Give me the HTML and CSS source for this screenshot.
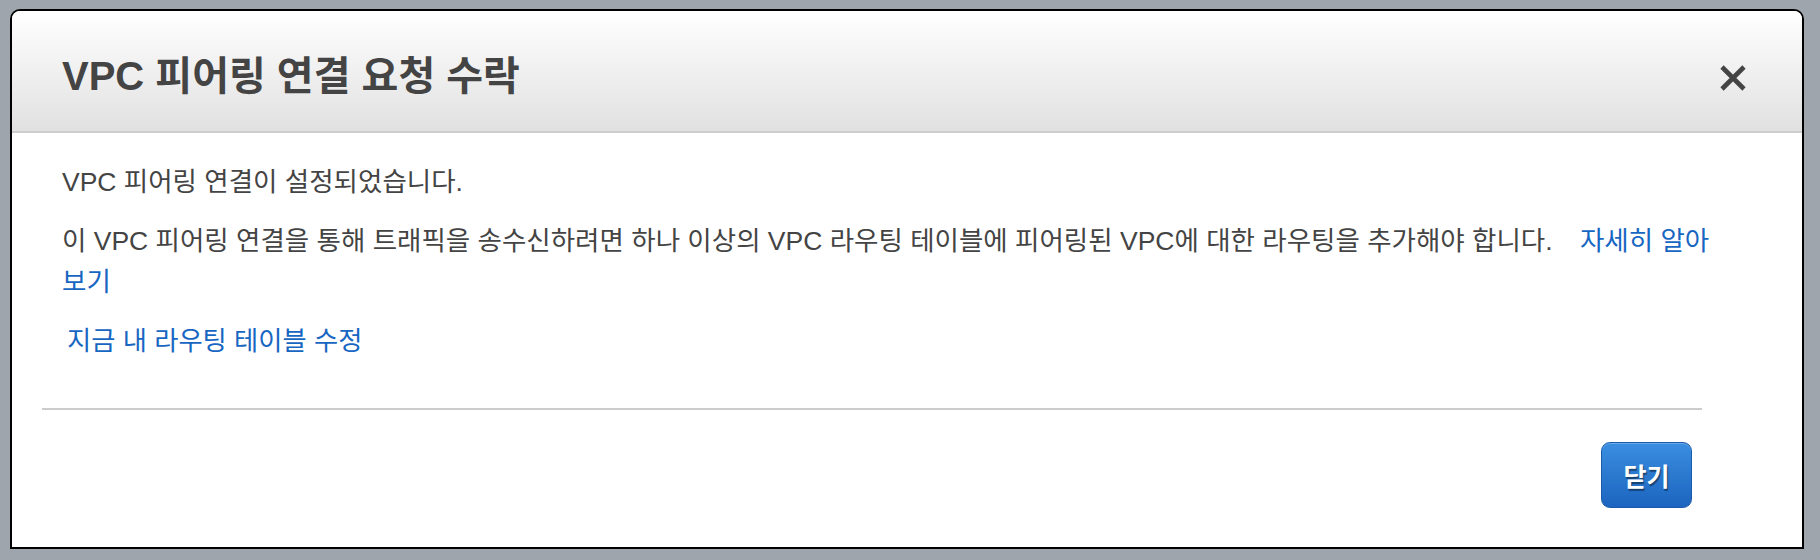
FILE: index.html
```html
<!DOCTYPE html>
<html lang="ko">
<head>
<meta charset="utf-8">
<title>VPC 피어링 연결 요청 수락</title>
<link rel="stylesheet" href="styles.css">
</head>
<body>
<div class="modal">
  <div class="modal-header">
    <h1 class="modal-title">VPC 피어링 연결 요청 수락</h1>
    <button class="close-btn" aria-label="닫기">
      <svg width="28" height="28" viewBox="0 0 28 28"><path d="M3 3 L25 25 M25 3 L3 25" stroke="#444" stroke-width="4.6" stroke-linecap="butt" fill="none"/></svg>
    </button>
  </div>
  <div class="modal-body">
    <p class="msg">VPC 피어링 연결이 설정되었습니다.</p>
    <p class="msg">이 VPC 피어링 연결을 통해 트래픽을 송수신하려면 하나 이상의 VPC 라우팅 테이블에 피어링된 VPC에 대한 라우팅을 추가해야 합니다. <a class="link learn" href="#">자세히 알아 보기</a></p>
    <p class="edit"><a class="link" href="#">지금 내 라우팅 테이블 수정</a></p>
  </div>
  <div class="modal-footer">
    <hr class="divider">
    <div class="actions">
      <button class="primary-btn">닫기</button>
    </div>
  </div>
</div>
</body>
</html>
```
FILE: styles.css
```css
html, body {
  margin: 0;
  padding: 0;
}
body {
  background: #9ea5ac;
  font-family: "Liberation Sans", "Noto Sans CJK KR", sans-serif;
  color: #444;
}
.modal {
  box-sizing: border-box;
  margin: 9px 0 0 10px;
  width: 1794px;
  height: 540px;
  border: 2px solid #000;
  border-radius: 10px 10px 0 0;
  background: #fff;
  overflow: hidden;
  display: flex;
  flex-direction: column;
}
.modal-header {
  box-sizing: content-box;
  height: 110px;
  padding: 10px 55px 0 50px;
  border-bottom: 2px solid #cdcdcd;
  background: linear-gradient(#ffffff, #e1e1e1);
  display: flex;
  align-items: center;
  justify-content: space-between;
}
.modal-title {
  margin: 0;
  font-size: 40px;
  font-weight: bold;
  color: #444;
  line-height: 46px;
}
.close-btn {
  background: none;
  border: 0;
  padding: 0;
  width: 28px;
  height: 28px;
  margin-top: 4px;
  display: flex;
  filter: blur(0.4px);
}
.modal-body {
  padding: 29px 62px 0 50px;
}
.msg {
  margin: 0 0 18px 0;
  font-size: 26.5px;
  line-height: 41px;
  color: #444;
}
.link {
  color: #1766c2;
  text-decoration: none;
}
.learn {
  margin-left: 20px;
}
.edit {
  margin: 16px 0 0 5px;
  font-size: 26.3px;
  line-height: 41px;
}
.modal-footer {
  padding: 0 100px 0 30px;
}
.divider {
  margin: 46px 0 0 0;
  border: 0;
  height: 2px;
  background: #cccccc;
}
.actions {
  display: flex;
  justify-content: flex-end;
  padding: 32px 10px 0 0;
}
.primary-btn {
  box-sizing: border-box;
  width: 91px;
  height: 66px;
  border: 1px solid #1a5cab;
  border-radius: 9px;
  background: linear-gradient(#3a8ee0, #1c64bf);
  box-shadow: inset 0 1px 0 rgba(255,255,255,0.25);
  color: #fff;
  font-family: "Liberation Sans", "Noto Sans CJK KR", sans-serif;
  font-size: 25px;
  font-weight: bold;
  text-shadow: 1px 2px 1px rgba(0, 0, 0, 0.45);
  padding: 0;
}
```
